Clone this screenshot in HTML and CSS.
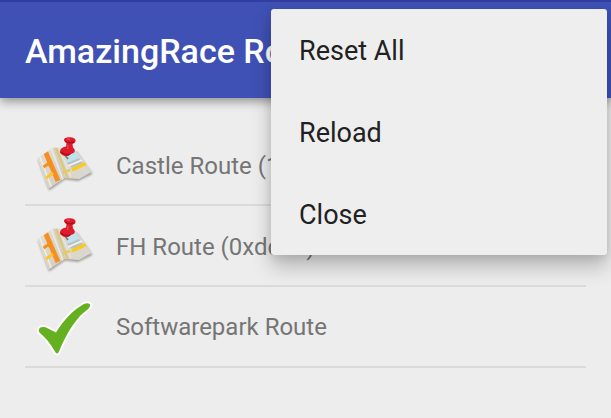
FILE: index.html
```
<!DOCTYPE html>
<html lang="en">
<head>
<meta charset="utf-8">
<title>AmazingRace Routes</title>
<link rel="stylesheet" href="styles.css">
</head>
<body>
<svg class="defs" width="0" height="0" aria-hidden="true">
  <defs>
    <linearGradient id="paper" x1="0" y1="0" x2="1" y2="1">
      <stop offset="0" stop-color="#e2dfd6"/><stop offset="1" stop-color="#d0ccc2"/>
    </linearGradient>
    <clipPath id="left"><path d="M12.500 28.500L28.500 17.500L40 48L23 59Z"/></clipPath>
    <clipPath id="right"><path d="M28.500 17.500L51 20L66.500 42L53 49.500L40 48Z"/></clipPath>
    <filter id="soft" x="-20%" y="-20%" width="140%" height="140%"><feGaussianBlur stdDeviation="1"/></filter>
    <symbol id="map" viewBox="0 0 80 70">
      <path d="M13 30L29 19L52 22L67.500 44L53 51L40 49.500L24 60.500Z" fill="#77736b" opacity=".65" filter="url(#soft)"/>
      <path d="M12.500 28.500L28.500 17.500L40 48L23 59Z" fill="url(#paper)"/>
      <g clip-path="url(#left)" fill="none">
        <path d="M15 27L27 59" stroke="#f0ede5" stroke-width="1.500"/>
        <path d="M20.500 22L33 51" stroke="#f58f20" stroke-width="5"/>
        <path d="M18.500 37L23 34L28 37" stroke="#f58f20" stroke-width="3"/>
        <path d="M21 48L28 43" stroke="#ffc42e" stroke-width="3"/>
        <path d="M26 18L38 50" stroke="#eeeae0" stroke-width="1.500"/>
      </g>
      <path d="M28.500 17.500L45 18L53 23L66.500 42L54 49L40 48Z" fill="#dad7cf"/>
      <g clip-path="url(#right)" fill="none">
        <path d="M44 20L50 20L54 29L41 33Z" fill="#bfe3ee"/>
        <path d="M42 33L54 28L58 34L47 38Z" fill="#b9c3c3"/>
        <path d="M31 18L43 49" stroke="#dbc878" stroke-width="2.500"/>
        <path d="M34 18L46 47" stroke="#e9e5db" stroke-width="1.500"/>
        <path d="M37 43L45 40" stroke="#e3cb62" stroke-width="2.500"/>
        <path d="M47 40L61 33.500" stroke="#ffc916" stroke-width="3.500"/>
        <path d="M43 36L57 30" stroke="#f4f4f2" stroke-width="1.500"/>
      </g>
      <path d="M40 25L43 29" stroke="#777" stroke-width="1.500"/>
      <path d="M39 10.500C38.500 7.500 43 6.500 47 7.500C50 8 51.500 10 50 12.500L47.500 14L48 17.500C51 20 50 23 47 23.500L43 26C39 26.500 34 24 35 21C35.500 18.500 38 17 41 16.500L41.500 13.500Z" fill="#dc1c2a"/>
      <path d="M40 11Q44 14 49 12M36 22Q40 26 45 24" fill="none" stroke="#ad101e" stroke-width="1.400"/>
      <path d="M42 9L45 9.500M43 15L42.500 19" fill="none" stroke="#ee444e" stroke-width="1.300"/>
    </symbol>
    <symbol id="check" viewBox="0 0 80 70">
      <path d="M14 37.500C15 34.500 19 34.500 23 36.500L31 40.500C38 29 48 18 59 12C62 10.500 66 11 65 14.500C63 18 59 20 55 24C46 34 39 47 34 59.500C33 62 31 62 30 59.500C25 51 20 45 15 41C14 40 13.500 39 14 37.500Z" fill="#64b01e" stroke="#fff" stroke-width="4" paint-order="stroke" stroke-linejoin="round"/>
    </symbol>
  </defs>
</svg>
<div class="screen">
  <header class="app-bar"><h1>AmazingRace Routes</h1></header>
  <ul class="routes">
    <li class="route"><svg class="icon"><use href="#map"/></svg><span>Castle Route (1/5)</span></li>
    <li class="route"><svg class="icon"><use href="#map"/></svg><span>FH Route (0xdcba)</span></li>
    <li class="route"><svg class="icon"><use href="#check"/></svg><span>Softwarepark Route</span></li>
  </ul>
  <div class="menu">
    <div class="menu-item">Reset All</div>
    <div class="menu-item">Reload</div>
    <div class="menu-item">Close</div>
  </div>
</div>
</body>
</html>
```
FILE: styles.css
```
* { box-sizing: border-box; }
body {
  margin: 0;
  background: #ededed;
  font-family: Roboto, "Liberation Sans", sans-serif;
}
.defs { position: absolute; }
.screen {
  position: relative;
  height: 418px;
  overflow: hidden;
}
.app-bar {
  display: flex;
  align-items: center;
  height: 98px;
  padding: 2px 25px 0;
  background: #3f51b5;
  border-top: 2px solid #303f9f;
  box-shadow: 0 3px 10px rgba(0, 0, 0, .42);
}
.app-bar h1 {
  margin: 0;
  color: #fff;
  font-size: 34px;
  font-weight: 500;
  line-height: 40px;
  white-space: nowrap;
}
.routes {
  margin: 0;
  padding: 27px 25px 0;
  list-style: none;
}
.route {
  display: flex;
  align-items: center;
  height: 81px;
  border-bottom: 2px solid #dbdbdb;
  color: #757575;
  font-size: 24px;
  white-space: nowrap;
}
.route span { padding-top: 2px; }
.route:last-child span { padding-top: 0; }
.icon {
  width: 80px;
  height: 70px;
  margin-right: 11px;
  flex: none;
}
.menu {
  position: absolute;
  top: 9px;
  left: 271px;
  width: 336px;
  height: 246px;
  border-radius: 3px;
  background: #eee;
  box-shadow: 0 12px 20px rgba(0, 0, 0, .23), 0 2px 10px rgba(0, 0, 0, .1);
}
.menu-item {
  display: flex;
  align-items: center;
  height: 82px;
  padding: 2px 0 0 28px;
  color: #212121;
  font-size: 27px;
}
```
